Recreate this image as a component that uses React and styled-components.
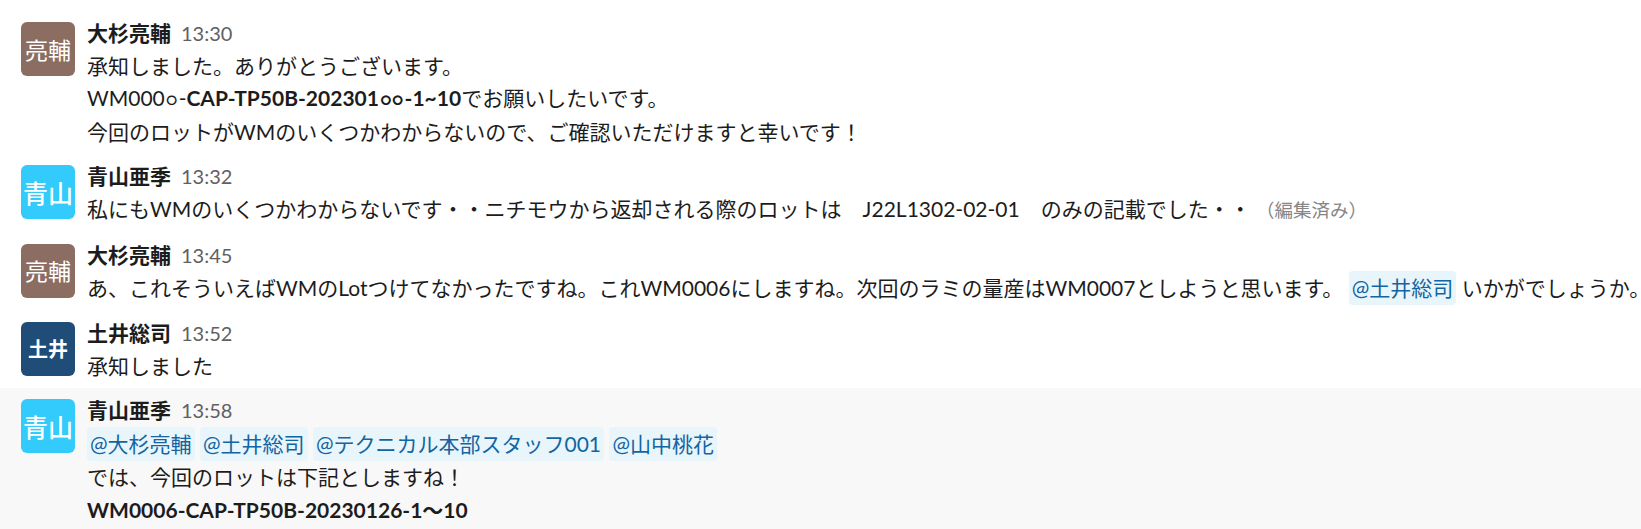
import React from 'react';
import styled, { createGlobalStyle } from 'styled-components';

const Global = createGlobalStyle`
  html, body { margin: 0; padding: 0; background: #fff; }
  body {
    font-family: Lato, "Noto Sans CJK JP", sans-serif;
    color: #1d1c1d;
    overflow: hidden;
  }
`;

const Feed = styled.div`
  width: 1641px;
  height: 529px;
  overflow: hidden;
  padding-top: 11px;
  box-sizing: border-box;
`;

const Row = styled.div`
  display: flex;
  align-items: flex-start;
  padding: 6px 20px 6px 21px;
  background: ${(p) => (p.$active ? '#f8f8f8' : 'transparent')};
`;

const Avatar = styled.div`
  flex: 0 0 54px;
  width: 54px;
  height: 54px;
  margin-top: 5px;
  margin-right: 12px;
  border-radius: 6px;
  background: ${(p) => p.$bg};
  color: #fff;
  display: flex;
  align-items: center;
  justify-content: center;
  font-family: "Noto Sans CJK JP", sans-serif;
  font-size: ${(p) => p.$size}px;
  font-weight: ${(p) => p.$weight};
  line-height: 1;
`;

const Content = styled.div`
  flex: 1;
  min-width: 0;
  font-size: 21px;
  line-height: 32.6px;
`;

const Header = styled.div`
  display: flex;
  align-items: baseline;
  white-space: nowrap;
`;

const Name = styled.span`
  font-weight: 700;
`;

const Time = styled.span`
  margin-left: 10px;
  font-size: 20px;
  line-height: 1;
  color: #616061;
`;

const Line = styled.div`
  white-space: nowrap;
`;

const Strong = styled.b`
  font-weight: 700;
`;

const Mark = styled.span`
  font-size: 0.85em;
  padding: 0 1px;
`;

const Mention = styled.span`
  display: inline-block;
  height: 34px;
  line-height: 34px;
  padding: 0 3px;
  border-radius: 4px;
  background: #e8f5fa;
  color: #1264a3;
`;

const Edited = styled.span`
  font-size: 18.5px;
  color: #868686;
`;

const AV = {
  ryosuke: { bg: '#8c6d62', label: '亮輔', size: 23, weight: 400 },
  aoyama: { bg: '#33cbfb', label: '青山', size: 25, weight: 500 },
  doi: { bg: '#1f4d78', label: '土井', size: 20, weight: 700 },
};

function Message({ who, name, time, active, children }) {
  const a = AV[who];
  return (
    <Row $active={active}>
      <Avatar $bg={a.bg} $size={a.size} $weight={a.weight}>{a.label}</Avatar>
      <Content>
        <Header>
          <Name>{name}</Name>
          <Time>{time}</Time>
        </Header>
        {children}
      </Content>
    </Row>
  );
}

export default function App() {
  return (
    <>
      <Global />
      <Feed>
        <Message who="ryosuke" name="大杉亮輔" time="13:30">
          <Line>承知しました。ありがとうございます。</Line>
          <Line>
            WM000<Mark>○</Mark>-
            <Strong>CAP-TP50B-202301<Mark>○○</Mark>-1~10</Strong>
            でお願いしたいです。
          </Line>
          <Line>今回のロットがWMのいくつかわからないので、ご確認いただけますと幸いです！</Line>
        </Message>
        <Message who="aoyama" name="青山亜季" time="13:32">
          <Line>
            私にもWMのいくつかわからないです・・ニチモウから返却される際のロットは　J22L1302-02-01　のみの記載でした・・ <Edited>（編集済み）</Edited>
          </Line>
        </Message>
        <Message who="ryosuke" name="大杉亮輔" time="13:45">
          <Line>
            あ、これそういえばWMのLotつけてなかったですね。これWM0006にしますね。次回のラミの量産はWM0007としようと思います。 <Mention>@土井総司</Mention> いかがでしょうか。
          </Line>
        </Message>
        <Message who="doi" name="土井総司" time="13:52">
          <Line>承知しました</Line>
        </Message>
        <Message who="aoyama" name="青山亜季" time="13:58" active>
          <Line>
            <Mention>@大杉亮輔</Mention> <Mention>@土井総司</Mention> <Mention>@テクニカル本部スタッフ001</Mention> <Mention>@山中桃花</Mention>
          </Line>
          <Line>では、今回のロットは下記としますね！</Line>
          <Line>
            <Strong>WM0006-CAP-TP50B-20230126-1〜10</Strong>
          </Line>
        </Message>
      </Feed>
    </>
  );
}
